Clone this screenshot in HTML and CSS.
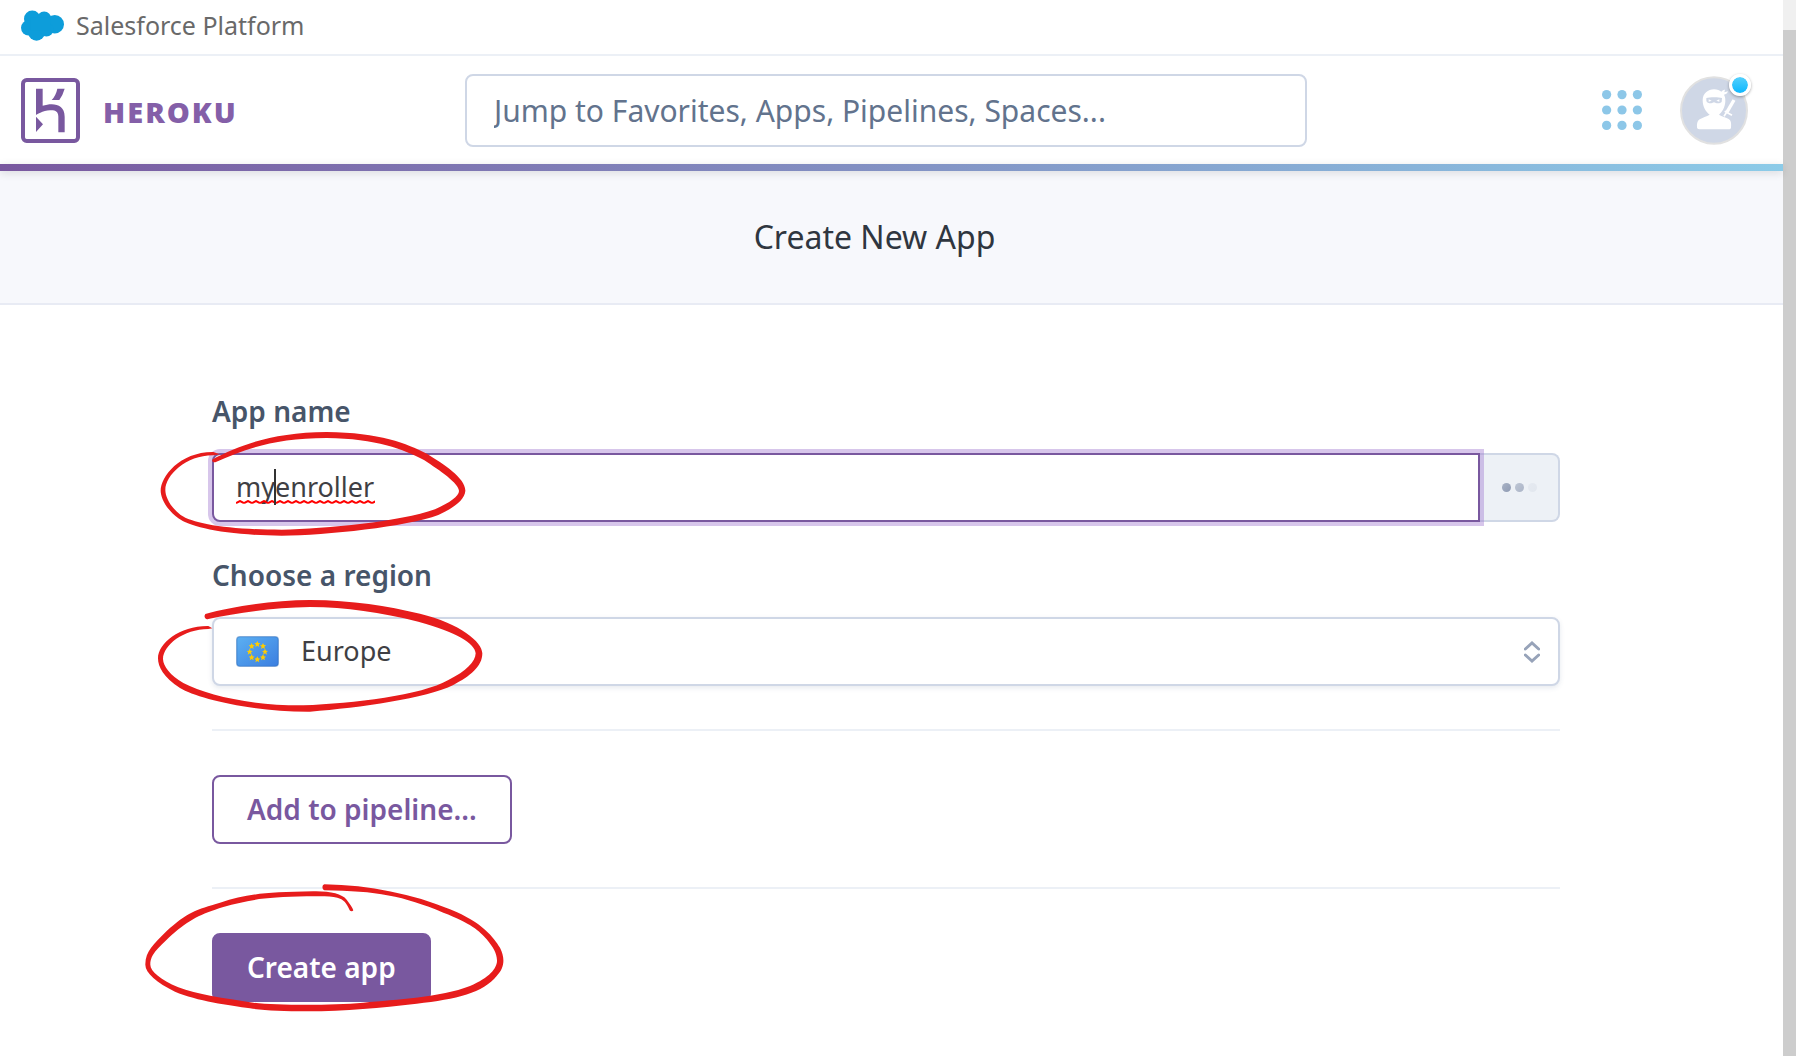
FILE: index.html
```html
<!DOCTYPE html>
<html lang="en">
<head>
<meta charset="utf-8">
<meta name="viewport" content="width=device-width, initial-scale=1">
<title>Create New App | Heroku</title>
<link rel="stylesheet" href="styles.css">
</head>
<body>
<div class="viewport">
  <div class="page">
    <div class="platform-bar">
      <svg class="cloud" viewBox="0 0 130 92" aria-hidden="true">
        <g fill="#0d9dda"><circle cx="34" cy="26" r="25"/><circle cx="70" cy="26" r="22"/><circle cx="102" cy="42" r="28"/><circle cx="23" cy="53" r="23"/><circle cx="47" cy="67" r="25"/><circle cx="77" cy="58" r="21"/><path d="M28 22h60v40H28z"/></g>
      </svg>
      <span>Salesforce Platform</span>
    </div>
    <header class="header">
      <a class="brand" href="#">
        <svg class="brand-mark" viewBox="63 234 177 195" aria-hidden="true">
          <rect x="69" y="240" width="165" height="183" rx="11" fill="none" stroke="#79589f" stroke-width="12"/>
          <path fill="#79589f" d="M108 266h20v51c28-9 66-8 66 33v47h-19v-47c0-15-9-20-25-19-21 1-42 14-42 14zM108 350l21 23-21 23zM172 266h22q-5 18-16 34h-23q13-14 17-34z"/>
        </svg>
        <span class="brand-name">HEROKU</span>
      </a>
      <input class="search" type="search" aria-label="Search" placeholder="Jump to Favorites, Apps, Pipelines, Spaces...">
      <div class="header-tools">
        <button class="icon-button" type="button" aria-label="Products">
          <svg class="grid-icon" viewBox="0 0 39 39" aria-hidden="true"><g fill="#8dc7e8"><circle cx="4.500" cy="4.500" r="4.500"/><circle cx="19.500" cy="4.500" r="4.500"/><circle cx="34.500" cy="4.500" r="4.500"/><circle cx="4.500" cy="19.500" r="4.500"/><circle cx="19.500" cy="19.500" r="4.500"/><circle cx="34.500" cy="19.500" r="4.500"/><circle cx="4.500" cy="34.500" r="4.500"/><circle cx="19.500" cy="34.500" r="4.500"/><circle cx="34.500" cy="34.500" r="4.500"/></g></svg>
        </button>
        <button class="icon-button avatar" type="button" aria-label="Account">
          <svg class="ninja" viewBox="0 0 204 207" aria-hidden="true">
            <ellipse cx="102" cy="103.500" rx="99" ry="100" fill="#cfd7e6" stroke="#e1e1e1" stroke-width="6"/>
            <path fill="#fff" d="M68 73c0-21 16-33 34-33 10 0 17 3 22 7 4-5 7-6 11-6l-2 8 11-3c-2 7-7 9-12 10 4 7 4 12 4 20-1 18-9 32-19 40 8 6 22 8 29 13 8 5 8 15 7 26-1 3-3 5-7 5H58c-4 0-7-2-7-6 0-10 0-19 8-24 8-6 21-8 30-14-12-8-21-24-21-43z"/>
            <path fill="#cfd7e6" d="M79 66c10-3 37-3 47 0l-1 12c-4 4-11 4-15 4-3 0-5-3-8-3s-5 3-8 3c-8 0-14-2-15-8z"/>
            <path fill="#fff" d="M86 70l9 4-9 3zM118 70l-9 4 9 3z"/>
            <path stroke="#fff" stroke-width="10" d="M162 72l-22 38"/><path stroke="#fff" stroke-width="5" d="M134 106l22 12M140 109l-8 12"/>
          </svg>
          <span class="badge"></span>
        </button>
      </div>
    </header>
    <div class="gradient-line"></div>
    <div class="title-bar"><h1>Create New App</h1></div>

    <main class="main">
      <form class="form">
        <label class="label" for="app-name">App name</label>
        <div class="name-row">
          <div class="name-field">
            <input class="control name-input" id="app-name" type="text" value="myenroller" spellcheck="false">
            <svg class="squiggle" aria-hidden="true"><defs><pattern id="wave" width="8" height="4" patternUnits="userSpaceOnUse"><path d="M0 3L4 1L8 3" fill="none" stroke="#f00" stroke-width="2"/></pattern></defs><rect width="100%" height="4" fill="url(#wave)"/></svg>
            <span class="caret"></span>
          </div>
          <div class="status" role="status" aria-label="Checking availability"><span class="dot"></span><span class="dot dot-mid"></span><span class="dot dot-faint"></span></div>
          <svg class="mark mark-name" viewBox="0 0 1080 540" aria-hidden="true"><path d="M218 238C300 195 400 157 560 156C720 158 800 190 862 222C910 252 978 295 976 333C974 360 940 385 895 405C800 440 560 466 425 467C250 466 150 440 115 415C75 385 62 350 62 332C62 290 120 215 220 216L240 223L220 226C140 225 76 285 76 330C76 350 90 380 122 405C160 432 270 449 425 449C560 447 780 425 885 388C930 368 957 348 957 333C957 310 900 272 852 240C790 208 710 176 560 174C410 174 320 205 226 247C218 248 214 242 218 238Z"/></svg>
        </div>

        <label class="label" for="region">Choose a region</label>
        <div class="region-row">
          <select class="control region-select" id="region"><option>Europe</option><option>United States</option></select>
          <svg class="flag" viewBox="0 0 129 93" aria-hidden="true">
            <defs><linearGradient id="flag-blue" x1="0" y1="0" x2="1" y2="1"><stop stop-color="#5cb0f2"/><stop offset="1" stop-color="#3b7ee0"/></linearGradient>
            <path id="star" fill="#fc0" d="M0-9l3 6 6 1-5 4 2 7-6-4-6 4 2-7-5-4 6-1z"/></defs>
            <rect x="2" y="2" width="125" height="89" rx="10" fill="url(#flag-blue)" stroke="#2868b8" stroke-opacity=".5" stroke-width="4"/>
            <use href="#star" x="64" y="24"/><use href="#star" x="81" y="30"/><use href="#star" x="87" y="47"/><use href="#star" x="81" y="64"/><use href="#star" x="64" y="70"/><use href="#star" x="47" y="64"/><use href="#star" x="41" y="47"/><use href="#star" x="47" y="30"/>
          </svg>
          <svg class="chevrons" viewBox="0 0 48 66" aria-hidden="true"><path d="M4 24L24 6L44 24M4 42L24 60L44 42" fill="none" stroke="#97a3b9" stroke-width="9" stroke-linecap="round"/></svg>
          <svg class="mark mark-region" viewBox="0 0 1140 510" aria-hidden="true"><path d="M196 162C280 138 400 121 510 120C640 121 740 138 840 161C960 191 1027 245 1027 280C1027 320 990 349 940 375C860 415 660 443 510 455C330 456 170 414 120 384C70 352 54 320 54 295C54 250 120 197 205 198L217 205L205 207C130 208 70 255 69 297C70 320 90 345 130 369C200 405 330 437 490 436C640 430 845 406 925 360C980 333 1006 305 1007 280C1005 250 950 217 835 185C720 157 620 142 510 141C400 142 290 160 205 177C196 180 190 170 196 162Z"/></svg>
        </div>
        <hr class="rule">
        <button class="button button-outline" type="button">Add to pipeline...</button>
        <hr class="rule">
        <div class="submit-row">
          <button class="button button-primary" type="submit">Create app</button>
          <svg class="mark mark-submit" viewBox="0 0 1200 840" aria-hidden="true"><path d="M583 400C720 402 850 430 960 475C1060 515 1090 560 1110 590C1125 620 1125 650 1100 675C1060 725 980 745 860 758C750 770 650 781 530 781C460 781 400 778 360 772C300 763 200 750 135 722C80 695 45 665 46 640C47 600 70 580 110 540C170 485 200 475 270 455C350 430 400 423 550 421C600 420 635 428 650 446C660 460 668 470 670 478C668 482 662 482 659 478C650 455 640 445 622 440C600 434 560 436 530 436C400 438 350 448 280 468C210 490 180 505 125 552C80 595 62 610 61 640C60 660 90 685 145 709C200 730 280 742 370 755C440 763 600 764 700 755C800 745 930 740 1020 705C1080 680 1102 650 1101 628C1100 605 1090 590 1070 565C1050 540 1020 515 940 485C820 435 740 420 583 418C575 414 576 402 583 400Z"/></svg>
        </div>
      </form>
    </main>
  </div>
  <div class="scroll-track" aria-hidden="true"><div class="scroll-thumb"></div></div>
</div>
</body>
</html>
```
FILE: styles.css
```css
* { box-sizing: border-box; }

body {
  margin: 0;
  background: #fff;
  color: #3f3f44;
  font-family: "Noto Sans", "Open Sans", sans-serif;
  font-size: 27px;
}

input, select, button { font: inherit; color: inherit; margin: 0; }

.viewport { display: flex; min-height: 100vh; }
.page { flex: 1; min-width: 0; }

.scroll-track { width: 13px; padding-top: 30px; background: #f0f0f0; display: flex; }
.scroll-thumb { flex: 1; background: #cdcdcd; }

.platform-bar {
  display: flex;
  align-items: center;
  gap: 12px;
  height: 56px;
  padding: 0 21px 4px;
  border-bottom: 2px solid #ecf0f6;
  color: #696969;
  font-size: 25px;
}
.cloud { width: 43px; height: 31px; }

.header {
  display: grid;
  grid-template-columns: 444px minmax(0, 842px) 1fr;
  align-items: center;
  height: 108px;
  padding: 0 35px 0 21px;
}
.brand { display: flex; align-items: center; gap: 23px; color: #845fa8; text-decoration: none; }
.brand-mark { width: 59px; height: 65px; }
.brand-name { padding-top: 2px; font-family: "Open Sans", sans-serif; font-size: 29px; font-weight: 800; letter-spacing: 2px; }

.search {
  width: 100%;
  height: 73px;
  padding: 0 27px;
  border: 2px solid #cfd7e6;
  border-radius: 8px;
  background: #fff;
  font-size: 30px;
  appearance: none;
}
.search::placeholder { color: #62738d; opacity: 1; }

.header-tools { display: flex; align-items: center; justify-content: flex-end; gap: 38px; }
.icon-button { display: block; padding: 0; border: 0; background: none; }
.grid-icon { display: block; width: 40px; height: 40px; }
.avatar { position: relative; }
.ninja { display: block; width: 68px; height: 69px; }
.badge {
  position: absolute;
  top: -2px;
  right: -3px;
  width: 22px;
  height: 22px;
  border: 3px solid #fff;
  border-radius: 50%;
  background: linear-gradient(#62d4fb, #00b3ff) border-box;
  background-clip: padding-box;
  box-shadow: 0 1px 3px rgba(0, 0, 0, .35);
}

.gradient-line {
  position: relative;
  height: 7px;
  background: linear-gradient(90deg, #79589f, #8ccbe8);
  box-shadow: 0 2px 9px rgba(0, 0, 0, .13);
}

.title-bar {
  display: flex;
  align-items: center;
  justify-content: center;
  height: 134px;
  padding: 0 34px 2px 0;
  border-bottom: 2px solid #e8ebf4;
  background: #f7f8fc;
}
h1 { margin: 0; color: #2f3640; font-size: 32px; font-weight: 400; }

.main { padding: 87px 223px 50px 212px; }
.label {
  display: block;
  margin-bottom: 23px;
  color: #475569;
  font-size: 28px;
  font-weight: 600;
  line-height: 38px;
}
.control {
  display: block;
  width: 100%;
  height: 69px;
  border: 2px solid #cfd7e6;
  border-radius: 8px;
  background: #fff;
  appearance: none;
  outline: 0;
}

.name-row { position: relative; display: flex; margin-bottom: 34px; }
.name-field { position: relative; z-index: 1; flex: 1; }
.name-input {
  padding: 0 22px;
  border-color: #79589f;
  border-radius: 8px 0 0 8px;
  box-shadow: 0 0 0 4px rgba(160, 118, 208, .42);
}
.squiggle { position: absolute; top: 47px; left: 24px; width: 139px; height: 4px; }
.caret { position: absolute; top: 16px; left: 62px; width: 2px; height: 36px; background: #333; }

.status {
  display: flex;
  align-items: center;
  gap: 4px;
  width: 80px;
  padding-left: 22px;
  border: 2px solid #cfd7e6;
  border-left: 0;
  border-radius: 0 8px 8px 0;
  background: #edf1f6;
}
.dot { width: 9px; height: 9px; border-radius: 50%; background: linear-gradient(135deg, #a9b3c6, #8f9bb3); }
.dot-mid { opacity: .7; }
.dot-faint { opacity: .12; }

.region-row { position: relative; }
.region-select { padding: 0 60px 0 87px; box-shadow: 0 2px 5px rgba(60, 80, 120, .12); }
.control { padding-bottom: 2px; }
.flag { position: absolute; top: 19px; left: 24px; width: 43px; height: 31px; }
.chevrons { position: absolute; top: 24px; right: 20px; width: 16px; height: 22px; pointer-events: none; }

.rule { height: 2px; margin: 43px 0 44px; border: 0; background: #ecf0f6; }

.button { height: 69px; padding: 0 33px 2px; border: 2px solid #79589f; border-radius: 8px; font-size: 28px; font-weight: 600; }
.button-outline { display: block; background: #fff; color: #79589f; }
.button-primary { background: #79589f; color: #fff; }
.submit-row { position: relative; }

/* Hand-drawn circles laid over the controls */
.mark { position: absolute; z-index: 2; fill: #e71c1c; pointer-events: none; }
.mark-name { top: -73px; left: -72px; width: 360px; height: 180px; }
.mark-region { top: -57px; left: -72px; width: 380px; height: 170px; }
.mark-submit { top: -182px; left: -82px; width: 400px; height: 280px; }
```
